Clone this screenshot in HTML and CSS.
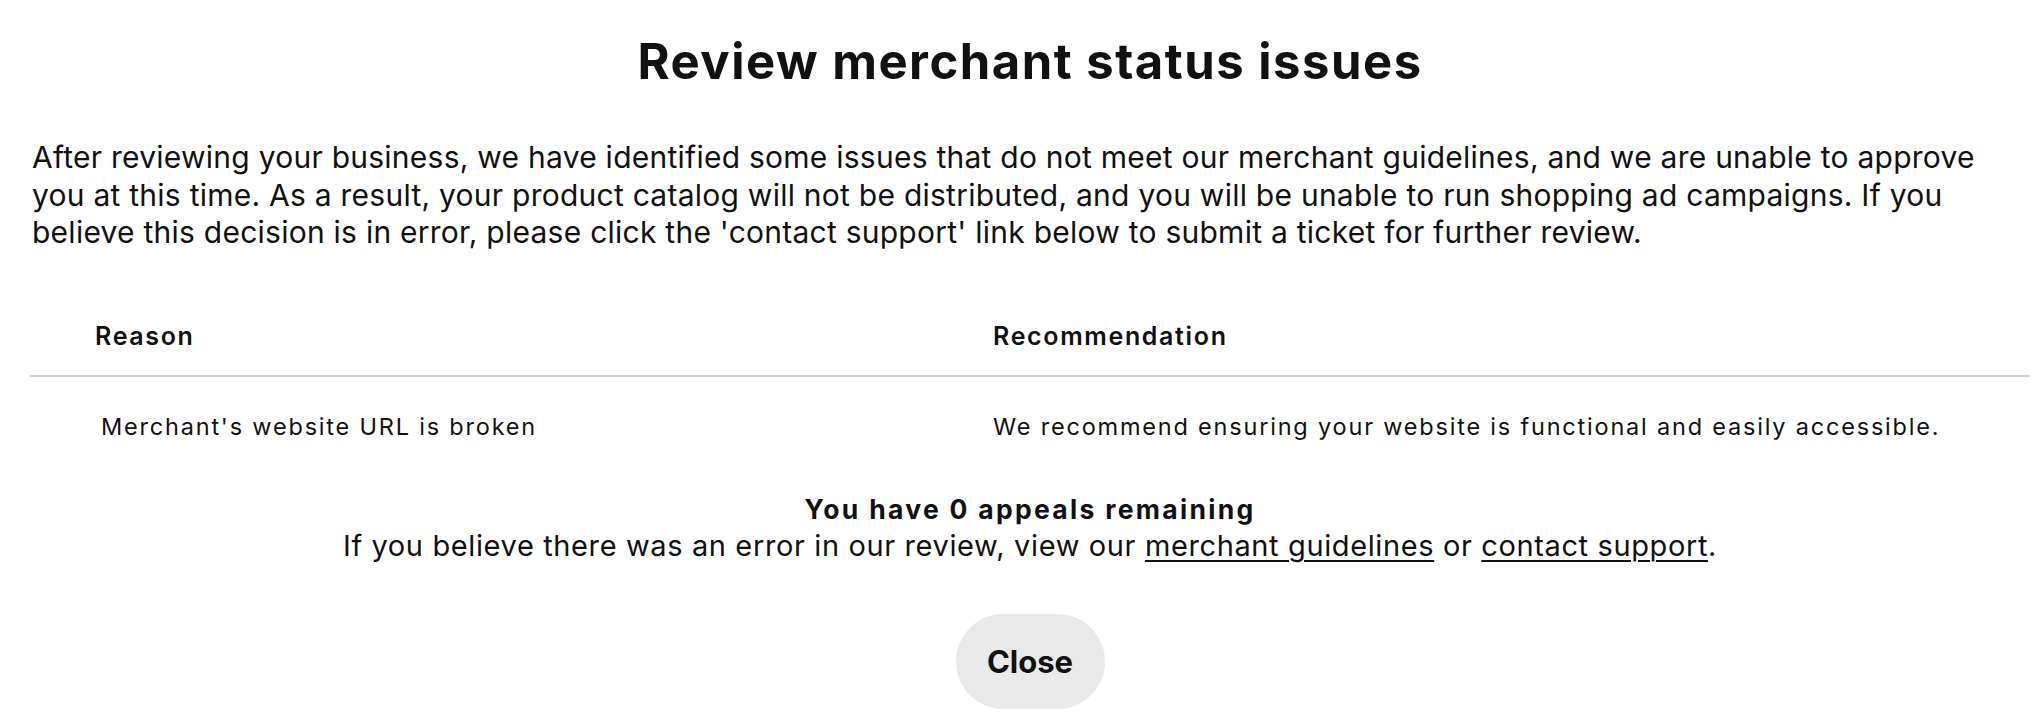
FILE: index.html
```html
<!DOCTYPE html>
<html lang="en">
<head>
<meta charset="utf-8">
<title>Review merchant status issues</title>
<link rel="stylesheet" href="styles.css">
</head>
<body>
<main class="modal">
  <h1 class="title">Review merchant status issues</h1>
  <p class="intro">After reviewing your business, we have identified some issues that do not meet our merchant guidelines, and we are unable to approve you at this time. As a result, your product catalog will not be distributed, and you will be unable to run shopping ad campaigns. If you believe this decision is in error, please click the 'contact support' link below to submit a ticket for further review.</p>
  <div class="table">
    <div class="row head">
      <div class="cell c1">Reason</div>
      <div class="cell c2">Recommendation</div>
    </div>
    <div class="row body">
      <div class="cell c1">Merchant's website URL is broken</div>
      <div class="cell c2">We recommend ensuring your website is functional and easily accessible.</div>
    </div>
  </div>
  <div class="appeals">
    <div class="appeals-title">You have 0 appeals remaining</div>
    <div class="appeals-text">If you believe there was an error in our review, view our <a href="#">merchant guidelines</a> or <a href="#">contact support</a>.</div>
  </div>
  <div class="actions">
    <button class="close-btn" type="button">Close</button>
  </div>
</main>
</body>
</html>
```

FILE: styles.css
```css
* { box-sizing: border-box; }
html, body { margin: 0; padding: 0; background: #fff; }
body {
  font-family: Inter, "Noto Sans", "Liberation Sans", sans-serif;
  color: #111111;
}
.modal {
  margin: 0 6px 0 30px;
  display: flex;
  flex-direction: column;
}
.title {
  margin: 0;
  padding-top: 33px;
  font-size: 49px;
  line-height: 58px;
  font-weight: 700;
  text-align: center;
  letter-spacing: 1.5px;
}
.intro {
  margin: 0;
  padding: 48px 30px 0 2px;
  font-size: 30px;
  line-height: 37.7px;
  font-weight: 400;
  letter-spacing: 0.25px;
}
.table {
  margin-top: 69px;
  display: flex;
  flex-direction: column;
}
.row {
  display: grid;
  grid-template-columns: 963px 1fr;
}
.row.head {
  border-bottom: 2px solid #cdcdcd;
  padding-bottom: 24px;
}
.row.head .cell {
  font-size: 25px;
  font-weight: 600;
  line-height: 30px;
  letter-spacing: 1.65px;
}
.row.head .c1 { padding-left: 65px; }
.row.body { padding-top: 35px; }
.row.body .cell {
  font-size: 23.5px;
  font-weight: 400;
  line-height: 30px;
  letter-spacing: 1.8px;
}
.row.body .c1 { padding-left: 71px; }
.appeals {
  margin-top: 50px;
  text-align: center;
}
.appeals-title {
  font-size: 26.5px;
  font-weight: 700;
  line-height: 35px;
  letter-spacing: 2.3px;
}
.appeals-text {
  font-size: 29px;
  line-height: 38px;
  letter-spacing: 0.62px;
}
.appeals-text a {
  color: #111111;
  text-decoration: underline;
  text-decoration-thickness: 2px;
  text-underline-offset: 4px;
}
.actions {
  margin-top: 49px;
  display: flex;
  justify-content: center;
}
.close-btn {
  width: 149px;
  height: 95px;
  border: none;
  border-radius: 48px;
  background: #e9e9e9;
  font-family: Inter, "Noto Sans", "Liberation Sans", sans-serif;
  font-size: 31px;
  font-weight: 700;
  color: #111111;
  padding: 0;
  display: flex;
  align-items: center;
  justify-content: center;
}
```
